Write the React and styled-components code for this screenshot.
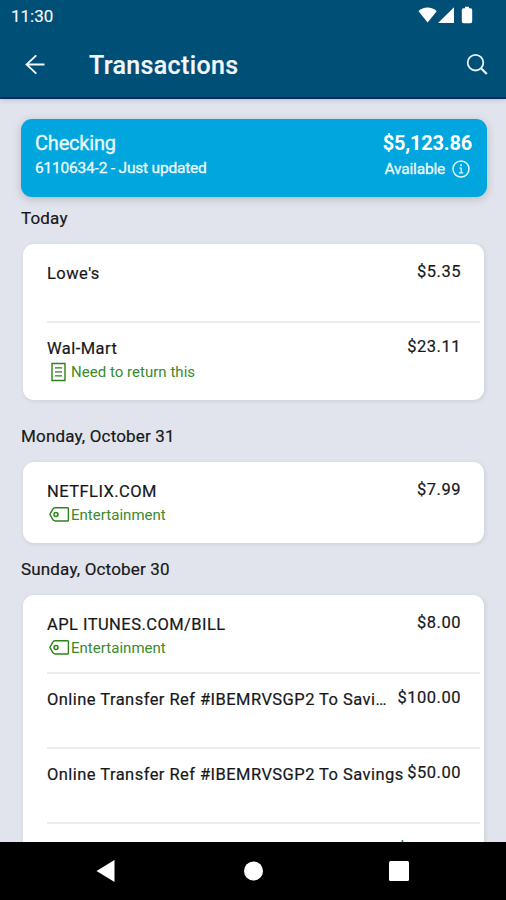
import React from 'react';
import styled, { createGlobalStyle } from 'styled-components';

const GlobalStyle = createGlobalStyle`
    * {
        box-sizing: border-box;
    }

    body {
        margin: 0;
        font-family: Roboto, "Liberation Sans", sans-serif;
    }
`;

const Screen = styled.div`
    width: 100%;
    height: 900px;
    display: flex;
    flex-direction: column;
    overflow: hidden;
    background-color: #e1e4ed;
    color: #17181a;
`;

const Header = styled.header`
    height: 99px;
    flex-shrink: 0;
    background-color: #004f76;
    border-bottom: 2px solid #06295f;
    box-shadow: 0 1px 5px rgba(0, 0, 0, 0.18);
    color: #f3f7fb;
`;

const StatusBar = styled.div`
    height: 32px;
    padding: 0 32px 0 11px;
    display: flex;
    align-items: center;
    justify-content: space-between;
`;

const Clock = styled.span`
    font-size: 17px;
    line-height: 32px;
    -webkit-text-stroke: 0.15px;
`;

const TitleBar = styled.div`
    height: 66px;
    padding: 0 17px 0 25px;
    display: flex;
    align-items: center;
`;

const Title = styled.h1`
    flex: 1;
    margin: 2px 0 0 44px;
    font-size: 25px;
    font-weight: 500;
    line-height: 30px;
    letter-spacing: 0.35px;
    -webkit-text-stroke: 0.2px;
`;

const Content = styled.main`
    flex: 1;
    min-height: 0;
    overflow: hidden;
    padding: 20px 19px 0 21px;
`;

const AccountCard = styled.section`
    height: 78px;
    padding: 12px 15px 0 14px;
    display: flex;
    justify-content: space-between;
    border-radius: 11px;
    background-color: #00a6dd;
    box-shadow: 0 2px 8px rgba(60, 65, 70, 0.26);
    color: #eefaff;
`;

const AccountColumn = styled.div`
    display: flex;
    flex-direction: column;
    align-items: ${props => props.$end ? 'flex-end' : 'flex-start'};
`;

const AccountName = styled.div`
    font-size: 20px;
    line-height: 24px;
    letter-spacing: -0.2px;
    -webkit-text-stroke: 0.3px;
`;

const Balance = styled.div`
    font-size: 20px;
    font-weight: 700;
    line-height: 24px;
    letter-spacing: -0.2px;
    color: #fff;
`;

const AccountDetail = styled.div`
    display: flex;
    align-items: center;
    gap: 7px;
    font-size: 15.5px;
    line-height: ${props => props.$end ? '28px' : '26px'};
    letter-spacing: -0.2px;
    -webkit-text-stroke: 0.3px;
    padding-right: ${props => props.$end ? '2px' : '0'};
`;

const DayHeading = styled.h2`
    margin: 0;
    height: ${props => props.$height}px;
    padding-top: ${props => props.$top}px;
    font-size: 17px;
    font-weight: 400;
    line-height: 20px;
    letter-spacing: 0.17px;
    -webkit-text-stroke: 0.2px;
`;

const Card = styled.div`
    margin: 0 3px 0 2px;
    padding: 2px 4px 4px 24px;
    border-radius: 11px;
    background-color: #fff;
    box-shadow: 1px 1px 4px rgba(60, 60, 70, 0.13);
`;

const Row = styled.div`
    height: 75px;
    padding: 16px 19px 0 0;

    & + & {
        border-top: 2px solid #ececee;
        padding-top: 14px;
    }
`;

const RowTop = styled.div`
    display: flex;
    justify-content: space-between;
    gap: 2px;
`;

const Name = styled.div`
    flex: 0 1 auto;
    min-width: 0;
    padding-top: 1px;
    overflow: hidden;
    text-overflow: ellipsis;
    white-space: nowrap;
    font-size: 16.5px;
    line-height: 22px;
    letter-spacing: 0.45px;
    -webkit-text-stroke: 0.2px;
`;

const Amount = styled.div`
    flex-shrink: 0;
    margin-top: ${props => props.$credit ? '1px' : '0'};
    font-size: 16.5px;
    line-height: 20px;
    letter-spacing: 0.5px;
    -webkit-text-stroke: 0.2px;
    color: ${props => props.$credit ? '#2b7d1c' : 'inherit'};
`;

const Note = styled.div`
    height: 24px;
    padding-left: 2px;
    display: flex;
    align-items: center;
    gap: 2px;
    font-size: 15px;
    letter-spacing: 0.03px;
    color: #3b8a2b;
`;

const NavBar = styled.nav`
    height: 58px;
    flex-shrink: 0;
    display: flex;
    align-items: center;
    justify-content: space-between;
    padding: 0 97px 0 96px;
    background-color: #000;
`;

const StatusIcons = () => (
    <svg width="56" height="20" viewBox="0 0 56 20" fill="#fff">
        <path d="M.500 5.200C5 .200 14 .200 18.700 5.200L9.600 16.500Z" />
        <path d="M20 17L36 1.300V17Z" />
        <path d="M47 .800h4v1.500h1.500q1.700 0 1.700 1.700v11.500q0 1.700-1.700 1.700h-7q-1.700 0-1.700-1.700v-11.500q0-1.700 1.700-1.700h1.500Z" />
    </svg>
);

const BackIcon = () => (
    <svg width="20" height="20" viewBox="0 0 20 20" fill="none" stroke="#f3f7fb" strokeWidth="1.8">
        <path d="M19.500 9.500H1.500M11.300 .300L1.500 9.500l9.800 9.200" />
    </svg>
);

const SearchIcon = () => (
    <svg width="23" height="23" viewBox="0 0 23 23" fill="none" stroke="#e6f0f6" strokeWidth="1.8">
        <circle cx="9.500" cy="8.700" r="7.800" />
        <path d="M15 14.200L20.800 20" strokeWidth="2.300" />
    </svg>
);

const InfoIcon = () => (
    <svg width="18" height="18" viewBox="0 0 18 18" fill="none" stroke="#e6f8ff" strokeWidth="1.5">
        <circle cx="9" cy="9" r="8" />
        <path d="M7.300 8H9.200V12.800M7 12.800h4.200" strokeWidth="1.200" />
        <circle cx="9" cy="5.300" r="1" fill="#e6f8ff" stroke="none" />
    </svg>
);

const MemoIcon = () => (
    <svg width="20" height="20" viewBox="0 0 20 20" fill="none" stroke="#2b8418" strokeWidth="1.4">
        <path d="M3 1.500H16V18.500H3Z" />
        <path d="M6 5.800h7M6 9.800h7M6 13.800h7" strokeWidth="1.200" />
    </svg>
);

const TagIcon = () => (
    <svg width="20" height="18" viewBox="0 0 20 18" fill="none" stroke="#2b8418" strokeWidth="1.400">
        <path d="M6.200 1.800H18.500Q19.400 1.800 19.400 2.800V14Q19.400 15 18.500 15H6.200Q4.500 15 3.500 13.200L.900 8.400L3.500 3.600Q4.500 1.800 6.200 1.800Z" strokeLinejoin="round" />
        <circle cx="7" cy="8.400" r="2" strokeWidth="1.500" />
    </svg>
);

const NavIcons = () => (
    <>
        <svg width="19" height="22" viewBox="0 0 19 22" fill="#fff"><path d="M18.500 0V22L.500 11Z" /></svg>
        <svg width="24" height="20" viewBox="0 0 24 20" fill="#fff"><circle cx="13.500" cy="10" r="9.500" /></svg>
        <svg width="20" height="20" viewBox="0 0 20 20" fill="#fff"><rect width="20" height="20" rx="1.500" /></svg>
    </>
);

const days = [
    {
        title: 'Today', top: 11, height: 47,
        items: [
            { name: "Lowe's", amount: '$5.35' },
            { name: 'Wal-Mart', amount: '$23.11', memo: 'Need to return this' },
        ],
    },
    {
        title: 'Monday, October 31', top: 26, height: 62,
        items: [
            { name: 'NETFLIX.COM', amount: '$7.99', tag: 'Entertainment' },
        ],
    },
    {
        title: 'Sunday, October 30', top: 16, height: 52,
        items: [
            { name: 'APL ITUNES.COM/BILL', amount: '$8.00', tag: 'Entertainment' },
            { name: 'Online Transfer Ref #IBEMRVSGP2 To Savings', amount: '$100.00' },
            { name: 'Online Transfer Ref #IBEMRVSGP2 To Savings', amount: '$50.00' },
            { name: '', amount: '$125.00', credit: true },
        ],
    },
];

function Transaction({ item }) {
    return <Row>
        <RowTop>
            <Name>{item.name}</Name>
            <Amount $credit={item.credit}>{item.amount}</Amount>
        </RowTop>
        {item.memo && <Note><MemoIcon />{item.memo}</Note>}
        {item.tag && <Note><TagIcon />{item.tag}</Note>}
    </Row>
}

export default function App() {
    return <Screen>
        <GlobalStyle />
        <Header>
            <StatusBar>
                <Clock>11:30</Clock>
                <StatusIcons />
            </StatusBar>
            <TitleBar>
                <BackIcon />
                <Title>Transactions</Title>
                <SearchIcon />
            </TitleBar>
        </Header>
        <Content>
            <AccountCard>
                <AccountColumn>
                    <AccountName>Checking</AccountName>
                    <AccountDetail>6110634-2 - Just updated</AccountDetail>
                </AccountColumn>
                <AccountColumn $end>
                    <Balance>$5,123.86</Balance>
                    <AccountDetail $end>Available <InfoIcon /></AccountDetail>
                </AccountColumn>
            </AccountCard>
            {days.map(day => <section key={day.title}>
                <DayHeading $top={day.top} $height={day.height}>{day.title}</DayHeading>
                <Card>
                    {day.items.map((item, i) => <Transaction key={i} item={item} />)}
                </Card>
            </section>)}
        </Content>
        <NavBar>
            <NavIcons />
        </NavBar>
    </Screen>
}
